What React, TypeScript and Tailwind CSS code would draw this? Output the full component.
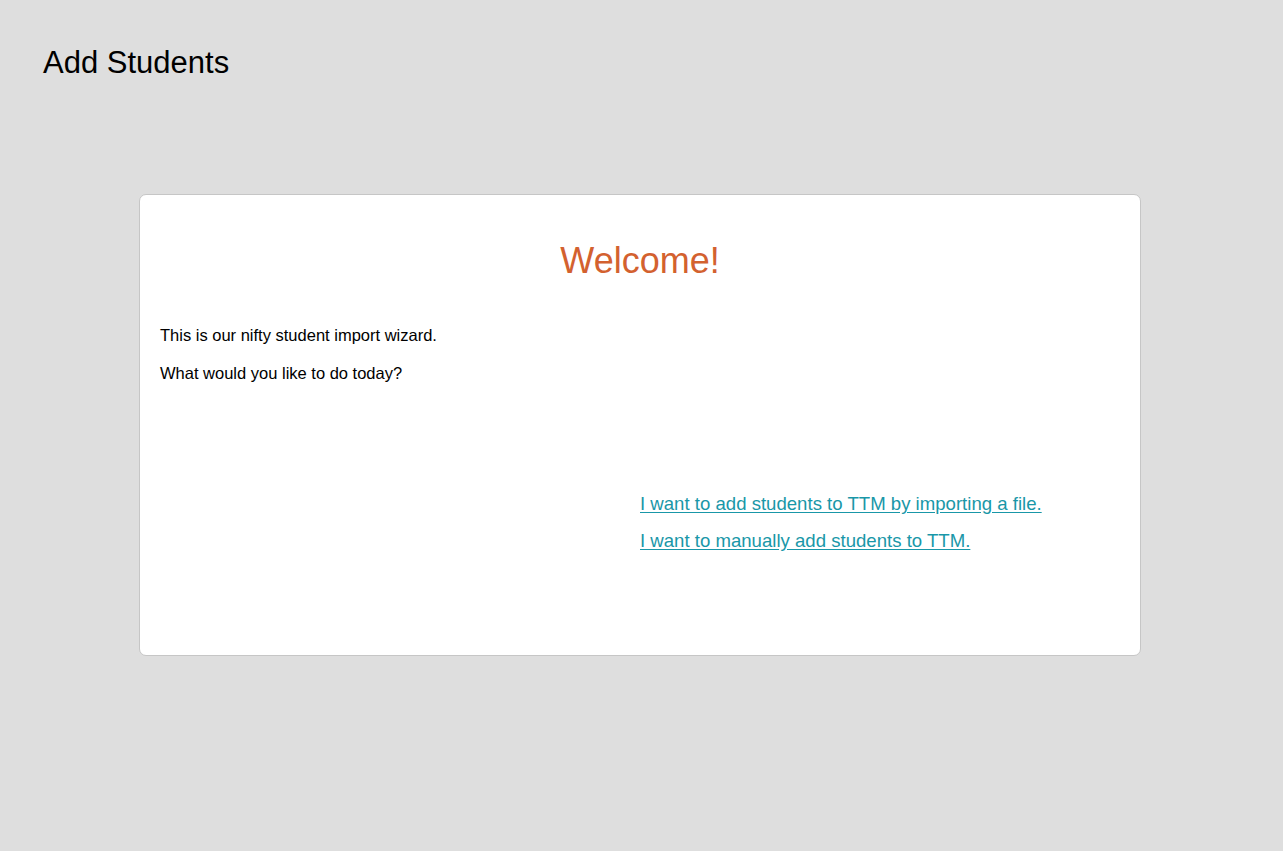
export default function App() {
  const font = { fontFamily: '"Liberation Sans", Arial, sans-serif' };

  return (
    <div className="w-full min-h-[851px] bg-[#dedede] text-black" style={font}>
      <header className="px-[43px] pt-[43px]">
        <h1 className="text-[31px] leading-[40px] font-normal">Add Students</h1>
      </header>

      <div className="ml-[139px] mt-[111px] w-[1002px] h-[462px] rounded-[7px] border border-[#c6c6c6] bg-white px-[20px] pt-[44px]">
        <h2 className="text-center text-[36px] leading-[44px] text-[#d3612f]">Welcome!</h2>

        <div className="mt-[40px] space-y-[14px] text-[16.5px] leading-[24px]">
          <p>This is our nifty student import wizard.</p>
          <p>What would you like to do today?</p>
        </div>

        <div className="grid grid-cols-2 mt-[106px]">
          <div />
          <div className="flex flex-col gap-[11px] text-[18.6px] leading-[26px]">
            <a href="#" className="self-start text-[#1997a8] underline underline-offset-2">
              I want to add students to TTM by importing a file.
            </a>
            <a href="#" className="self-start text-[#1997a8] underline underline-offset-2">
              I want to manually add students to TTM.
            </a>
          </div>
        </div>
      </div>
    </div>
  );
}
